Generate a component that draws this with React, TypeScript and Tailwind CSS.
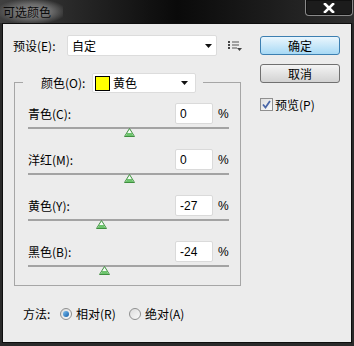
import React from "react";

const sliders = [
  { label: "青色(C):", value: 0 },
  { label: "洋红(M):", value: 0 },
  { label: "黄色(Y):", value: -27 },
  { label: "黑色(B):", value: -24 },
];

const Arrow = () => (
  <svg width="7" height="4" viewBox="0 0 7 4">
    <polygon points="0,0 7,0 3.5,4" fill="#111" />
  </svg>
);

const Thumb = ({ value }: { value: number }) => {
  const left = ((value + 100) / 200) * 201 - 5;
  return (
    <svg
      className="absolute top-[1px]"
      style={{ left }}
      width="11"
      height="9"
      viewBox="0 0 11 9"
    >
      <polygon points="5.5,0.5 10.5,8.5 0.5,8.5" fill="#f4fbf4" stroke="#3f8f3f" strokeWidth="1" />
      <polygon points="3.2,5 7.8,5 9.3,8 1.7,8" fill="#6cc46c" />
    </svg>
  );
};

const SliderRow = ({ label, value }: { label: string; value: number }) => (
  <div className="flex flex-col h-[46px]">
    <div className="flex items-center h-[21px]">
      <span className="flex-1 text-[12px] leading-none">{label}</span>
      <input
        readOnly
        value={String(value)}
        className="w-[38px] h-[21px] bg-white border border-[#dadada] rounded-[2px] px-[4px] text-[12px] text-black outline-none font-['Liberation_Sans',sans-serif]"
      />
      <span className="ml-[5px] w-[11px] text-[12px] leading-none font-['Liberation_Sans',sans-serif]">%</span>
    </div>
    <div className="relative mt-[3px] h-[2px] bg-[#a3a3a3]">
      <Thumb value={value} />
    </div>
  </div>
);

const Radio = ({ checked }: { checked?: boolean }) => (
  <span className="flex items-center justify-center w-[12px] h-[12px] rounded-full border border-[#8e8f8f] bg-gradient-to-br from-[#dcdcdc] to-[#fafafa]">
    {checked && (
      <span className="w-[6px] h-[6px] rounded-full bg-gradient-to-br from-[#7cc0f0] to-[#0d5ea8]" />
    )}
  </span>
);

export default function App() {
  return (
    <div className="w-[354px] h-[346px] flex flex-col bg-[#2a2a2a] text-black font-['Noto_Sans_CJK_SC',sans-serif] overflow-hidden">
      <div className="h-[23px] flex items-start justify-between bg-gradient-to-r from-[#404040] via-[#0a0a0a] to-[#2f2f2f]">
        <span className="pl-[3px] pr-[12px] pt-[4px] pb-[4px] text-[12px] leading-[15px] text-[#0a0a0a] bg-[radial-gradient(ellipse_at_center,#8a8a8a_0%,#6a6a6a_45%,transparent_80%)]">
          可选颜色
        </span>
        <div className="mr-[1px] w-[48px] h-[16px] flex items-center justify-center border border-t-0 border-[#8a8a8a] rounded-b-[4px] bg-[#1c1c1c] shadow-[inset_0_0_0_1px_#101010]">
          <svg width="12" height="10" viewBox="0 0 12 10">
            <path d="M2 1 L10 9 M10 1 L2 9" stroke="#ffffff" strokeWidth="2.6" strokeLinecap="square" />
          </svg>
        </div>
      </div>

      <div className="mx-[2px] mb-[3px] flex-1 flex bg-[#ececec] border border-[#0e0e0e] pl-[10px] pt-[11px]">
        <div className="w-[229px] flex flex-col">
          <div className="flex items-center h-[21px]">
            <span className="w-[54px] text-[12px] leading-none">预设(E):</span>
            <div className="w-[150px] h-[21px] flex items-center justify-between bg-white border border-[#dcdcdc] rounded-[2px] pl-[4px] pr-[4px]">
              <span className="text-[12px] leading-none">自定</span>
              <Arrow />
            </div>
            <svg className="ml-[11px]" width="14" height="10" viewBox="0 0 14 10">
              <rect x="0" y="0" width="2" height="2" fill="#444" />
              <rect x="4" y="0.5" width="7" height="1" fill="#555" />
              <rect x="0" y="3" width="2" height="2" fill="#444" />
              <rect x="4" y="3.5" width="7" height="1" fill="#555" />
              <rect x="0" y="6" width="2" height="2" fill="#444" />
              <rect x="4" y="6.5" width="5" height="1" fill="#555" />
              <polygon points="9,7 14,7 11.5,10" fill="#444" />
            </svg>
          </div>

          <div className="ml-[1px] mt-[26px] w-[227px] h-[204px] border border-[#a6a6a6] flex flex-col">
            <div className="-mt-[10px] ml-[8px] w-[180px] h-[20px] flex items-center bg-[#ececec]">
              <span className="ml-[18px] w-[51px] text-[12px] leading-none">颜色(O):</span>
              <div className="w-[104px] h-[20px] flex items-center bg-white border border-[#dcdcdc] rounded-[2px] pl-[2px] pr-[7px]">
                <span className="w-[15px] h-[15px] bg-[#ffff00] border border-black" />
                <span className="ml-[3px] flex-1 text-[12px] leading-none">黄色</span>
                <Arrow />
              </div>
            </div>
            <div className="mt-[10px] pl-[13px] pr-[11px] flex flex-col">
              {sliders.map((s) => (
                <SliderRow key={s.label} label={s.label} value={s.value} />
              ))}
            </div>
          </div>

          <div className="mt-[21px] ml-[10px] flex items-center h-[14px] text-[12px] leading-none">
            <span className="w-[37px]">方法:</span>
            <Radio checked />
            <span className="ml-[4px] w-[53px]">相对(R)</span>
            <Radio />
            <span className="ml-[4px]">绝对(A)</span>
          </div>
        </div>

        <div className="ml-[18px] w-[80px] flex flex-col">
          <button className="mt-[1px] h-[19px] rounded-[3px] border border-[#3c7fb1] bg-gradient-to-b from-[#eaf6fd] to-[#a7d9f5] text-[12px] leading-none">
            确定
          </button>
          <button className="mt-[9px] h-[19px] rounded-[3px] border border-[#707070] bg-gradient-to-b from-[#f4f4f4] to-[#d2d2d2] text-[12px] leading-none">
            取消
          </button>
          <div className="mt-[15px] flex items-center">
            <span className="w-[13px] h-[13px] flex items-center justify-center border border-[#8f8f8f] bg-gradient-to-br from-[#dedede] to-[#fbfbfb]">
              <svg width="9" height="9" viewBox="0 0 9 9">
                <path d="M1 4.5 L3.5 7.5 L8 1" stroke="#4a67a8" strokeWidth="1.8" fill="none" />
              </svg>
            </span>
            <span className="ml-[2px] text-[12px] leading-none">预览(P)</span>
          </div>
        </div>
      </div>
    </div>
  );
}
